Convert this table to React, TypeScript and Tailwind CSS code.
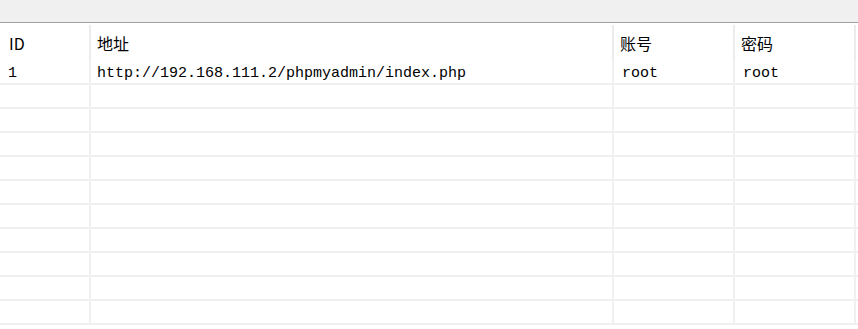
const cols = [
  { key: 'id', title: 'ID', w: 'w-[89px]' },
  { key: 'url', title: '地址', w: 'w-[523px]' },
  { key: 'user', title: '账号', w: 'w-[121px]' },
  { key: 'pass', title: '密码', w: 'w-[121px]' },
];

const rows = [
  { id: '1', url: 'http://192.168.111.2/phpmyadmin/index.php', user: 'root', pass: 'root' },
];

const EMPTY = 10;

function Cell({ first, w, children }: { first?: boolean; w: string; children?: React.ReactNode }) {
  return (
    <div
      className={`${w} shrink-0 h-full flex items-center pt-[3px] ${
        first ? 'pl-[8px]' : 'pl-[6px] border-l-2 border-[#f0f0f0]'
      }`}
    >
      {children}
    </div>
  );
}

export default function App() {
  const body = [...rows, ...Array.from({ length: EMPTY }, () => null)];
  return (
    <div className="w-[858px] h-[329px] overflow-hidden bg-white text-black">
      <div className="h-[22px] bg-[#f0f0f0]" />
      <div className="h-px bg-[#a0a0a0]" />
      <div className="h-[38px] flex pt-[2px] font-['Noto_Sans_CJK_SC',sans-serif] text-[16px]">
        {cols.map((c, i) => (
          <div
            key={c.key}
            className={`${c.w} shrink-0 flex items-center ${
              i === 0 ? 'pl-[9px]' : 'pl-[6px] border-l-2 border-[#ececec]'
            }`}
          >
            {c.title}
          </div>
        ))}
        <div className="flex-1 border-l-2 border-[#ececec]" />
      </div>
      {body.map((r, idx) => (
        <div
          key={idx}
          className="h-[24px] flex border-b-2 border-[#f0f0f0] font-['Liberation_Mono',monospace] text-[15px] leading-none"
        >
          <Cell first w={cols[0].w}>
            {r?.id}
          </Cell>
          <Cell w={cols[1].w}>{r?.url}</Cell>
          <Cell w={cols[2].w}>
            <span className="pl-[2px]">{r?.user}</span>
          </Cell>
          <Cell w={cols[3].w}>
            <span className="pl-[2px]">{r?.pass}</span>
          </Cell>
          <div className="flex-1 border-l-2 border-[#f0f0f0]" />
        </div>
      ))}
    </div>
  );
}
